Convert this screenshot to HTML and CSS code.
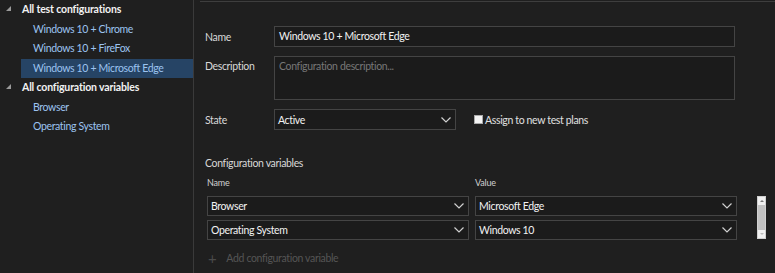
FILE: index.html
```html
<!DOCTYPE html>
<html lang="en">
  <head>
    <meta charset="UTF-8" />
    <title>Test configurations</title>
    <link rel="stylesheet" href="styles.css">
  </head>
  <body>
    <aside class="tree">
      <div class="tree-row group">
        <span class="twisty"></span>All test configurations
      </div>
      <div class="tree-row item">Windows 10 + Chrome</div>
      <div class="tree-row item">Windows 10 + FireFox</div>
      <div class="tree-row item selected">Windows 10 + Microsoft Edge</div>
      <div class="tree-row group">
        <span class="twisty"></span>All configuration variables
      </div>
      <div class="tree-row item">Browser</div>
      <div class="tree-row item">Operating System</div>
    </aside>

    <main class="editor">
      <div class="form">
        <label class="field-label">Name</label>
        <div class="input">Windows 10 + Microsoft Edge</div>

        <label class="field-label top">Description</label>
        <div class="input textarea placeholder">Configuration description...</div>

        <label class="field-label">State</label>
        <div class="state-row">
          <div class="select state">
            <span>Active</span>
            <svg class="chevron" viewBox="0 0 10 6"><path d="M0.5 0.5 L5 5 L9.5 0.5" /></svg>
          </div>
          <label class="check"><span class="box"></span>Assign to new test plans</label>
        </div>
      </div>

      <section class="variables">
        <h2>Configuration variables</h2>
        <div class="var-table">
          <div class="var-grid">
            <div class="col-head">Name</div>
            <div class="col-head">Value</div>

            <div class="select">
              <span>Browser</span>
              <svg class="chevron" viewBox="0 0 10 6"><path d="M0.5 0.5 L5 5 L9.5 0.5" /></svg>
            </div>
            <div class="select">
              <span>Microsoft Edge</span>
              <svg class="chevron" viewBox="0 0 10 6"><path d="M0.5 0.5 L5 5 L9.5 0.5" /></svg>
            </div>

            <div class="select">
              <span>Operating System</span>
              <svg class="chevron" viewBox="0 0 10 6"><path d="M0.5 0.5 L5 5 L9.5 0.5" /></svg>
            </div>
            <div class="select">
              <span>Windows 10</span>
              <svg class="chevron" viewBox="0 0 10 6"><path d="M0.5 0.5 L5 5 L9.5 0.5" /></svg>
            </div>
          </div>
          <div class="scrollbar">
            <span class="arrow up"></span>
            <span class="thumb"></span>
            <span class="arrow down"></span>
          </div>
        </div>
        <div class="add-row"><span class="plus">+</span>Add configuration variable</div>
      </section>
    </main>
  </body>
</html>
```

FILE: styles.css
```css
body {
  margin: 0;
  height: 273px;
  display: flex;
  background-color: #1f1f1f;
  font-family: "Segoe UI", Lato, "Noto Sans", sans-serif;
  font-size: 10.5px;
  letter-spacing: -0.35px;
  color: #e6e6e6;
  overflow: hidden;
}

/* left tree */
.tree {
  width: 193px;
  border-right: 1px solid #3a3a3a;
  flex-shrink: 0;
}
.tree-row {
  height: 19.5px;
  line-height: 19.5px;
  white-space: nowrap;
}
.tree-row.group {
  display: flex;
  align-items: center;
  padding-left: 6px;
  font-weight: bold;
  letter-spacing: -0.15px;
  color: #f2f2f2;
}
.twisty {
  width: 0;
  height: 0;
  border-left: 5px solid transparent;
  border-bottom: 5px solid #9a9a9a;
  margin-right: 11px;
  margin-top: -2px;
}
.tree-row.item {
  margin-left: 21px;
  padding-left: 12px;
  color: #9cc3f0;
}
.tree-row.selected {
  background-color: #264465;
}

/* right editor */
.editor {
  flex: 1;
  margin-left: 6px;
  margin-top: 1px;
  border-top: 1px solid #3e3e3e;
  padding-left: 5px;
}
.form {
  display: grid;
  grid-template-columns: 69px 461px;
  row-gap: 9px;
  margin-top: 24px;
  align-items: center;
}
.field-label {
  color: #d8d8d8;
}
.field-label.top {
  align-self: start;
  padding-top: 4px;
}
.input {
  box-sizing: border-box;
  height: 21px;
  line-height: 19px;
  padding: 0 4px;
  border: 1px solid #444;
  background-color: #1b1b1b;
  color: #f2f2f2;
}
.input.textarea {
  height: 44px;
}
.placeholder {
  color: #777;
}
.state-row {
  display: flex;
  align-items: center;
}
.select {
  box-sizing: border-box;
  height: 20px;
  display: flex;
  align-items: center;
  justify-content: space-between;
  padding: 0 4px 0 3px;
  border: 1px solid #444;
  background-color: #1b1b1b;
  color: #f2f2f2;
}
.select.state {
  width: 182px;
  height: 21px;
}
.chevron {
  width: 10px;
  height: 6px;
  fill: none;
  stroke: #d0d0d0;
  stroke-width: 1.2;
}
.check {
  display: flex;
  align-items: center;
  margin-left: 18px;
  color: #e0e0e0;
}
.box {
  box-sizing: border-box;
  width: 9px;
  height: 9px;
  background-color: #f4f4f4;
  border: 1px solid #aaa;
  margin-right: 2px;
}

/* configuration variables */
.variables {
  margin-top: 27px;
}
.variables h2 {
  margin: 0;
  font-size: 10.5px;
  font-weight: normal;
  color: #d8d8d8;
}
.var-table {
  display: flex;
  align-items: flex-start;
  margin-top: 6px;
}
.var-grid {
  display: grid;
  grid-template-columns: 262px 262px;
  column-gap: 6px;
  row-gap: 4px;
  margin-left: 2px;
}
.col-head {
  font-size: 9px;
  letter-spacing: -0.2px;
  color: #cfcfcf;
  height: 17px;
  line-height: 16px;
}
.scrollbar {
  margin-left: 20px;
  margin-top: 21px;
  width: 9px;
  height: 43px;
  box-sizing: border-box;
  background-color: #f0f0f0;
  border: 1px solid #d0d0d0;
  display: flex;
  flex-direction: column;
  align-items: center;
}
.arrow {
  width: 0;
  height: 0;
  border-left: 2px solid transparent;
  border-right: 2px solid transparent;
  margin: 3px 0;
}
.arrow.up {
  border-bottom: 2px solid #777;
}
.arrow.down {
  border-top: 2px solid #bbb;
}
.thumb {
  flex: 1;
  width: 7px;
  background-color: #c2c2c2;
}
.add-row {
  display: flex;
  align-items: center;
  margin-top: 9px;
  margin-left: 3px;
  color: #555;
}
.plus {
  font-size: 15px;
  margin-right: 10px;
  color: #4a4a4a;
}
```
